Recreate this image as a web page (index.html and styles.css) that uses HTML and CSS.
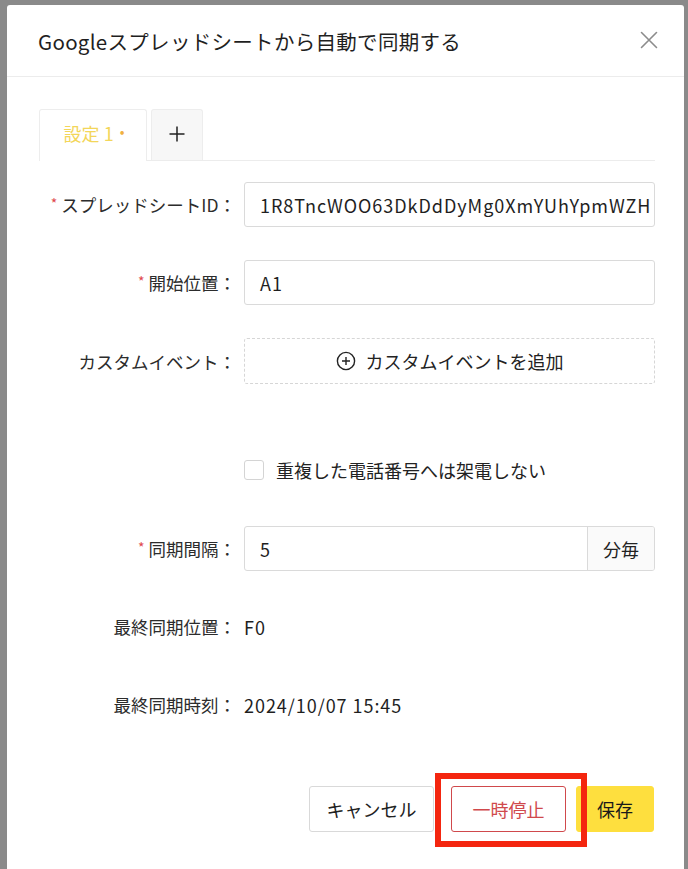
FILE: index.html
```html
<!DOCTYPE html>
<html lang="ja">
<head>
<meta charset="utf-8">
<title>Googleスプレッドシートから自動で同期する</title>
<link rel="stylesheet" href="styles.css">
</head>
<body>
<div class="modal">
  <div class="modal-header">
    <div class="modal-title">Googleスプレッドシートから自動で同期する</div>
    <button class="close" aria-label="close">
      <svg width="18" height="18" viewBox="0 0 18 18"><path d="M1.5 1.5 L16.5 16.5 M16.5 1.5 L1.5 16.5" stroke="#8c8c8c" stroke-width="1.6" fill="none" stroke-linecap="round"/></svg>
    </button>
  </div>
  <div class="modal-body">
    <div class="tabs">
      <div class="tab active">設定 1<span class="dot">•</span></div>
      <div class="tab add">
        <svg width="16" height="16" viewBox="0 0 16 16"><path d="M8 0.5 V15.5 M0.5 8 H15.5" stroke="#222" stroke-width="1.5" fill="none"/></svg>
      </div>
    </div>

    <div class="form">
      <div class="row">
        <div class="label"><span class="req">*</span>スプレッドシートID：</div>
        <div class="control"><div class="input latin">1R8TncWOO63DkDdDyMg0XmYUhYpmWZH</div></div>
      </div>
      <div class="row">
        <div class="label"><span class="req">*</span>開始位置：</div>
        <div class="control"><div class="input latin">A1</div></div>
      </div>
      <div class="row">
        <div class="label">カスタムイベント：</div>
        <div class="control">
          <div class="dashed">
            <svg width="20" height="20" viewBox="0 0 20 20"><circle cx="10" cy="10" r="8.6" stroke="#222" stroke-width="1.4" fill="none"/><path d="M10 6 V14 M6 10 H14" stroke="#222" stroke-width="1.4"/></svg>
            <span>カスタムイベントを追加</span>
          </div>
        </div>
      </div>
      <div class="row check-row">
        <div class="label"></div>
        <div class="control check">
          <span class="box"></span>
          <span>重複した電話番号へは架電しない</span>
        </div>
      </div>
      <div class="row sync-row">
        <div class="label"><span class="req">*</span>同期間隔：</div>
        <div class="control">
          <div class="group">
            <div class="input grow latin">5</div>
            <div class="addon">分毎</div>
          </div>
        </div>
      </div>
      <div class="row info-row">
        <div class="label">最終同期位置：</div>
        <div class="control text latin">F0</div>
      </div>
      <div class="row info-row">
        <div class="label">最終同期時刻：</div>
        <div class="control text latin">2024/10/07 15:45</div>
      </div>
    </div>

    <div class="footer">
      <button class="btn cancel">キャンセル</button>
      <button class="btn pause">一時停止</button>
      <button class="btn save">保存</button>
    </div>
  </div>
</div>
<div class="annotation"></div>
</body>
</html>
```

FILE: styles.css
```css
html, body {
  margin: 0;
  padding: 0;
  height: 100%;
  overflow: hidden;
}
body {
  background: #8a8a8a;
  font-family: "Noto Sans CJK JP", "Noto Sans", sans-serif;
  color: #222;
  position: relative;
}
.modal {
  margin: 5px 0 0 7px;
  width: 677px;
  height: 900px;
  background: #fff;
  border-radius: 3px;
}
.modal-header {
  height: 71px;
  border-bottom: 1px solid #ececec;
  display: flex;
  align-items: center;
  justify-content: space-between;
  padding: 0 26px 0 31px;
}
.modal-title {
  font-size: 20.5px;
  color: #1f1f1f;
  letter-spacing: 0.3px;
}
.close {
  border: none;
  background: none;
  padding: 0;
  width: 18px;
  height: 18px;
  display: flex;
  margin-top: -1px;
}
.modal-body {
  padding: 32px 29px 0 32px;
}
.tabs {
  display: flex;
  gap: 4px;
  border-bottom: 1px solid #ececec;
  height: 51px;
}
.tab {
  height: 51px;
  box-sizing: border-box;
  border: 1px solid #ededed;
  border-bottom: none;
  border-radius: 3px 3px 0 0;
  display: flex;
  align-items: center;
  justify-content: center;
}
.tab.active {
  width: 108px;
  background: #fff;
  color: #f3d65a;
  font-size: 18px;
  height: 52px;
  margin-bottom: -1px;
  padding-bottom: 6px;
  padding-left: 2px;
}
.tab.active .dot {
  color: #f0b040;
  font-size: 14px;
  margin-left: 6px;
  position: relative;
  top: -2px;
}
.tab.add {
  width: 52px;
  background: #f7f7f7;
  padding-bottom: 2px;
}
.form {
  margin-top: 21px;
  display: flex;
  flex-direction: column;
  gap: 33px;
}
.row {
  display: flex;
  align-items: center;
  min-height: 45px;
}
.label {
  width: 205px;
  flex: none;
  text-align: right;
  padding-right: 8px;
  box-sizing: border-box;
  font-size: 17.5px;
  color: #2c2c2c;
  white-space: nowrap;
}
.req {
  color: #e0484d;
  font-size: 14px;
  margin-right: 4px;
  position: relative;
  top: -3px;
}
.control {
  flex: 1;
  min-width: 0;
}
.latin {
  letter-spacing: 0.95px;
}
.input {
  height: 45px;
  box-sizing: border-box;
  border: 1px solid #dadada;
  border-radius: 3px;
  padding: 0 15px;
  display: flex;
  align-items: center;
  font-size: 18px;
  color: #1f1f1f;
  white-space: nowrap;
  overflow: hidden;
}
.dashed {
  height: 46px;
  box-sizing: border-box;
  border: 1px dashed #d6d6d6;
  border-radius: 3px;
  display: flex;
  align-items: center;
  justify-content: center;
  gap: 10px;
  font-size: 18px;
  color: #222;
}
.check-row {
  margin-top: 30px;
}
.check {
  display: flex;
  align-items: center;
  gap: 12px;
  font-size: 18px;
  color: #222;
}
.check .box {
  width: 20px;
  height: 20px;
  box-sizing: border-box;
  border: 1px solid #d4d4d4;
  border-radius: 3px;
  background: #fff;
}
.sync-row {
  margin-top: 1px;
}
.info-row {
  margin-top: 0;
}
.group {
  display: flex;
  height: 45px;
  border: 1px solid #dadada;
  border-radius: 3px;
  box-sizing: border-box;
  overflow: hidden;
}
.group .input {
  border: none;
  border-radius: 0;
  height: 43px;
  flex: 1;
}
.addon {
  width: 66px;
  flex: none;
  background: #fafafa;
  border-left: 1px solid #dadada;
  display: flex;
  align-items: center;
  justify-content: center;
  font-size: 18px;
  color: #222;
}
.text {
  font-size: 18px;
  color: #1f1f1f;
}
.footer {
  margin-top: 59px;
  display: flex;
  justify-content: flex-end;
  padding-right: 1px;
}
.btn {
  height: 46px;
  box-sizing: border-box;
  border-radius: 3px;
  font-family: inherit;
  font-size: 18px;
  padding: 0;
  background: #fff;
}
.cancel {
  width: 125px;
  border: 1px solid #d9d9d9;
  color: #222;
}
.pause {
  width: 115px;
  margin-left: 17px;
  border: 1px solid #d0494c;
  color: #d0494c;
}
.save {
  width: 78px;
  margin-left: 10px;
  border: 1px solid #fedf3e;
  background: #fedf3e;
  color: #1a1a1a;
}
.annotation {
  position: absolute;
  left: 435px;
  top: 773px;
  width: 152px;
  height: 74px;
  box-sizing: border-box;
  border: 6px solid #f4260f;
}
```
